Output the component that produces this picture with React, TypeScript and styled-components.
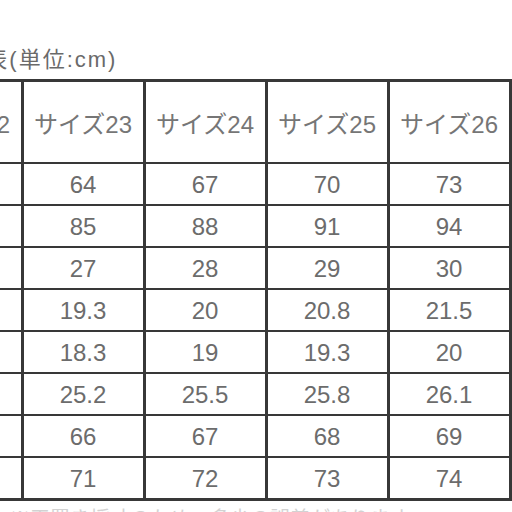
import React from 'react'
import styled, { createGlobalStyle } from 'styled-components'

const GlobalStyle = createGlobalStyle`
  html, body {
    margin: 0;
    padding: 0;
    background: #ffffff;
    overflow: hidden;
  }
  body {
    width: 512px;
    height: 512px;
    font-family: "Liberation Sans", "Noto Sans CJK JP", sans-serif;
  }
`

const headers = ['サイズ22', 'サイズ23', 'サイズ24', 'サイズ25', 'サイズ26']

const rows = [
  { label: '着丈', values: ['61', '64', '67', '70', '73'] },
  { label: '胸囲', values: ['82', '85', '88', '91', '94'] },
  { label: '肩幅', values: ['26', '27', '28', '29', '30'] },
  { label: '袖丈', values: ['18.5', '19.3', '20', '20.8', '21.5'] },
  { label: '袖口', values: ['17.6', '18.3', '19', '19.3', '20'] },
  { label: '裾幅', values: ['24.9', '25.2', '25.5', '25.8', '26.1'] },
  { label: 'ウエスト', values: ['65', '66', '67', '68', '69'] },
  { label: 'ヒップ', values: ['70', '71', '72', '73', '74'] },
]

const Page = styled.div`
  width: 512px;
  height: 512px;
  overflow: hidden;
  color: #707070;
`

const Title = styled.div`
  height: 79px;
  display: flex;
  align-items: flex-end;
  padding-bottom: 6px;
  margin-left: -86px;
  font-size: 22px;
  letter-spacing: 2px;
  color: #6a6a6a;
  box-sizing: border-box;
  white-space: nowrap;
`

const Grid = styled.div`
  display: grid;
  grid-template-columns: repeat(6, 119px);
  grid-template-rows: 80px repeat(8, 40px);
  column-gap: 3px;
  row-gap: 2px;
  padding: 3px;
  margin-left: -223.5px;
  width: max-content;
  background: #383838;
`

const Cell = styled.div<{ $head?: boolean }>`
  background: #ffffff;
  display: flex;
  align-items: center;
  justify-content: center;
  font-size: 24px;
  color: ${p => (p.$head ? '#767676' : '#6c6c6c')};
  padding-top: ${p => (p.$head ? '0' : '2px')};
  box-sizing: border-box;
  white-space: nowrap;
`

const Note = styled.div`
  margin-top: 2px;
  padding-left: 10px;
  font-size: 20px;
  color: #d2d2d2;
  white-space: nowrap;
`

export default function App() {
  return (
    <Page>
      <GlobalStyle />
      <Title>サイズ表(単位:cm)</Title>
      <Grid>
        <Cell $head>項目</Cell>
        {headers.map(h => (
          <Cell key={h} $head>
            {h}
          </Cell>
        ))}
        {rows.map(r => (
          <React.Fragment key={r.label}>
            <Cell>{r.label}</Cell>
            {r.values.map((v, i) => (
              <Cell key={i}>{v}</Cell>
            ))}
          </React.Fragment>
        ))}
      </Grid>
      <Note>※平置き採寸のため、多少の誤差があります</Note>
    </Page>
  )
}
